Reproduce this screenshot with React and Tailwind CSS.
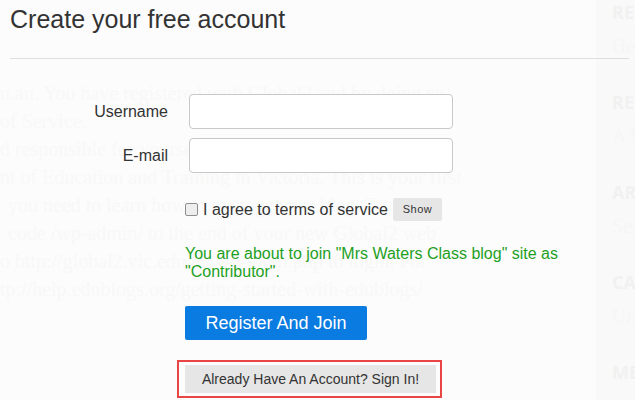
const pageLines = [
  { text: "u.au. You have registered with Global2 and by doing so", pad: "" },
  { text: "of Service.", pad: "" },
  { text: "d responsible for yourself and your content. Global2 is", pad: "" },
  { text: "nt of Education and Training in Victoria. This is your first", pad: "" },
  { text: "you need to learn how to manage your blog. To", pad: "pl-[8px]" },
  { text: "code /wp-admin/ to the end of your new Global2 web", pad: "pl-[8px]" },
  { text: "o http://global2.vic.edu.au/wp-login.php to login. For", pad: "" },
  { text: "tp://help.edublogs.org/getting-started-with-edublogs/", pad: "" },
];

const widgets = [
  ["RECENT POSTS", "Hello world!"],
  ["RECENT COMMENTS", "A WordPress Commenter"],
  ["ARCHIVES", "September 2017"],
  ["CATEGORIES", "Uncategorized"],
  ["META", ""],
];

export default function App() {
  return (
    <div className="relative w-[635px] h-[400px] overflow-hidden bg-[#fcfcfc]">
      {/* blog page behind the signup modal */}
      <div className="flex h-full">
        <div className="flex-1 overflow-hidden pt-[79px] font-['Liberation_Serif',serif] text-[20px] leading-[28px] text-[#f8f8f8]">
          {pageLines.map((line, i) => (
            <div key={i} className={`whitespace-nowrap ${line.pad}`}>
              {line.text}
            </div>
          ))}
        </div>
        <aside className="w-[39px] shrink-0 overflow-hidden bg-[#f9f9f9] pl-4">
          {widgets.map(([title, item], i) => (
            <div key={i} className="mb-[30px] whitespace-nowrap">
              <div className="font-['Open_Sans',sans-serif] text-[18px] font-bold leading-6 text-[#f1f1f1]">
                {title}
              </div>
              <div className="mt-2 h-[28px] font-['Liberation_Serif',serif] text-[20px] leading-[28px] text-[#f6f6f6]">
                {item}
              </div>
            </div>
          ))}
        </aside>
      </div>

      <div className="absolute inset-0 font-['Liberation_Sans',Arial,sans-serif] text-[#333]">
        <h1 className="pt-[5px] pl-[10px] text-[25px] leading-[28px] font-normal">
          Create your free account
        </h1>
        <div className="mt-[25px] ml-[10px] mr-[6px] h-px bg-[#dedede]" />

        <div className="mt-[35px] grid grid-cols-[168px_264px] gap-x-[21px] gap-y-[9px] items-center">
          <label className="text-right text-[16px]">Username</label>
          <input className="h-[35px] rounded border border-[#c8c8c8] bg-white" />
          <label className="text-right text-[16px]">E-mail</label>
          <input className="h-[35px] rounded border border-[#c8c8c8] bg-white" />
        </div>

        <div className="mt-[25px] ml-[185px] flex items-center h-[23px]">
          <span className="w-[13px] h-[13px] rounded-[2px] border border-[#8f8f8f] bg-[#eeeeee]" />
          <span className="ml-[5px] text-[16px] leading-none">I agree to terms of service</span>
          <button className="ml-[5px] w-[49px] h-[23px] rounded-[2px] bg-[#e6e6e6] text-[11px] tracking-[0.5px] text-[#333]">
            Show
          </button>
        </div>

        <p className="mt-[24px] ml-[185px] text-[16px] leading-[18px] text-[#1ea01e]">
          You are about to join "Mrs Waters Class blog" site as
          <br />
          "Contributor".
        </p>

        <button className="mt-[25px] ml-[185px] block w-[182px] h-[34px] rounded-[2px] bg-[#0a7be0] text-[18px] text-white">
          Register And Join
        </button>

        <div className="mt-[20px] ml-[177px] w-[265px] h-[38px] border-2 border-[#e84545] pt-[3px] pl-[6px]">
          <button className="w-[251px] h-[28px] bg-[#e6e6e6] text-[14px] text-[#333]">
            Already Have An Account? Sign In!
          </button>
        </div>
      </div>
    </div>
  );
}
